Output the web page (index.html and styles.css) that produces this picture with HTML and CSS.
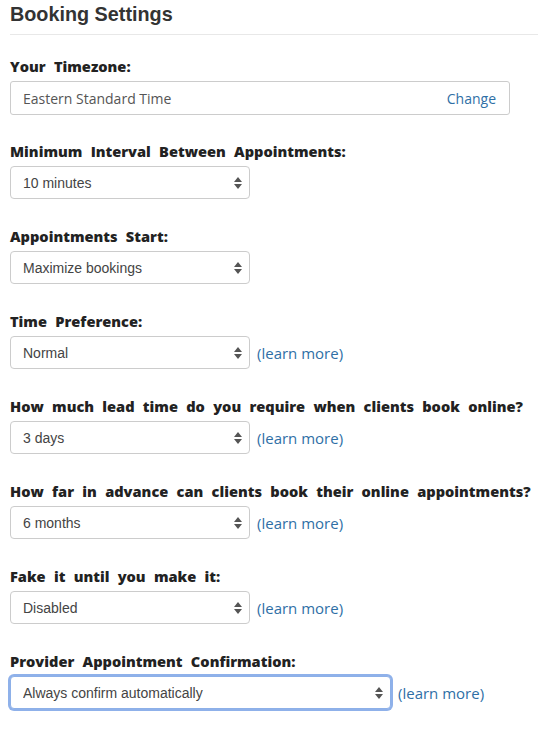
FILE: index.html
```html
<!DOCTYPE html>
<html>
<head>
<meta charset="utf-8">
<link rel="stylesheet" href="styles.css">
</head>
<body>
<div class="page">
  <h1 class="title">Booking Settings</h1>

  <div class="field">
    <label class="label">Your Timezone:</label>
    <div class="tz">
      <span class="tz-value">Eastern Standard Time</span>
      <a class="link" href="#">Change</a>
    </div>
  </div>

  <div class="field">
    <label class="label">Minimum Interval Between Appointments:</label>
    <div class="row">
      <div class="sel"><select><option>10 minutes</option></select><svg class="arr" width="8" height="12" viewBox="0 0 8 12"><path d="M4 0L8 5H0Z M4 12L8 7H0Z" fill="#555"/></svg></div>
    </div>
  </div>

  <div class="field">
    <label class="label">Appointments Start:</label>
    <div class="row">
      <div class="sel"><select><option>Maximize bookings</option></select><svg class="arr" width="8" height="12" viewBox="0 0 8 12"><path d="M4 0L8 5H0Z M4 12L8 7H0Z" fill="#555"/></svg></div>
    </div>
  </div>

  <div class="field">
    <label class="label">Time Preference:</label>
    <div class="row">
      <div class="sel"><select><option>Normal</option></select><svg class="arr" width="8" height="12" viewBox="0 0 8 12"><path d="M4 0L8 5H0Z M4 12L8 7H0Z" fill="#555"/></svg></div>
      <a class="link more" href="#">(learn more)</a>
    </div>
  </div>

  <div class="field">
    <label class="label">How much lead time do you require when clients book online?</label>
    <div class="row">
      <div class="sel"><select><option>3 days</option></select><svg class="arr" width="8" height="12" viewBox="0 0 8 12"><path d="M4 0L8 5H0Z M4 12L8 7H0Z" fill="#555"/></svg></div>
      <a class="link more" href="#">(learn more)</a>
    </div>
  </div>

  <div class="field">
    <label class="label">How far in advance can clients book their online appointments?</label>
    <div class="row">
      <div class="sel"><select><option>6 months</option></select><svg class="arr" width="8" height="12" viewBox="0 0 8 12"><path d="M4 0L8 5H0Z M4 12L8 7H0Z" fill="#555"/></svg></div>
      <a class="link more" href="#">(learn more)</a>
    </div>
  </div>

  <div class="field">
    <label class="label">Fake it until you make it:</label>
    <div class="row">
      <div class="sel"><select><option>Disabled</option></select><svg class="arr" width="8" height="12" viewBox="0 0 8 12"><path d="M4 0L8 5H0Z M4 12L8 7H0Z" fill="#555"/></svg></div>
      <a class="link more" href="#">(learn more)</a>
    </div>
  </div>

  <div class="field">
    <label class="label">Provider Appointment Confirmation:</label>
    <div class="row">
      <div class="sel sel-wide focused"><select><option>Always confirm automatically</option></select><svg class="arr" width="8" height="12" viewBox="0 0 8 12"><path d="M4 0L8 5H0Z M4 12L8 7H0Z" fill="#555"/></svg></div>
      <a class="link more" href="#">(learn more)</a>
    </div>
  </div>
</div>
</body>
</html>
```

FILE: styles.css
```css
* { box-sizing: border-box; }
html, body { margin: 0; padding: 0; background: #fff; }
body { font-family: "Open Sans", "Liberation Sans", sans-serif; color: #222; }

.page { padding: 0 0 0 10px; }

.title {
  margin: 0;
  padding: 3px 0 0 0;
  height: 35px;
  font-family: "Liberation Sans", Arial, sans-serif;
  font-weight: bold;
  font-size: 19.8px;
  color: #333;
  border-bottom: 1px solid #e8e8e8;
}

.field { margin-top: 20px; height: 65px; }

.label {
  display: block;
  font-family: "Open Sans", sans-serif;
  font-weight: 800;
  font-size: 14.6px;
  word-spacing: 4.5px;
  line-height: 22px;
  height: 26px;
  color: #222;
  white-space: nowrap;
}

.tz {
  width: 500px;
  height: 34px;
  border: 1px solid #ccc;
  border-radius: 3px;
  display: flex;
  align-items: center;
  justify-content: space-between;
  padding: 0 13px 0 12px;
  font-size: 14px;
  color: #555;
}

.link {
  color: #2f6fa6;
  text-decoration: none;
  font-family: "Open Sans", sans-serif;
  font-size: 14px;
}
.more { font-size: 15px; }

.row { display: flex; align-items: center; gap: 7px; }

.sel {
  position: relative;
  width: 240px;
  height: 33px;
}
.sel select {
  -webkit-appearance: none;
  appearance: none;
  width: 100%;
  height: 100%;
  border: 1px solid #ccc;
  border-radius: 4px;
  background: #fff;
  font-family: "Liberation Sans", Arial, sans-serif;
  font-size: 14px;
  color: #444;
  padding: 0 12px;
  margin: 0;
  outline: none;
}
.sel .arr {
  position: absolute;
  right: 8px;
  top: 11px;
  pointer-events: none;
}
.sel-wide { width: 381px; }
.focused select {
  border-color: #8db0e8;
  box-shadow: 0 0 0 2px #8fb1ea;
}
```
